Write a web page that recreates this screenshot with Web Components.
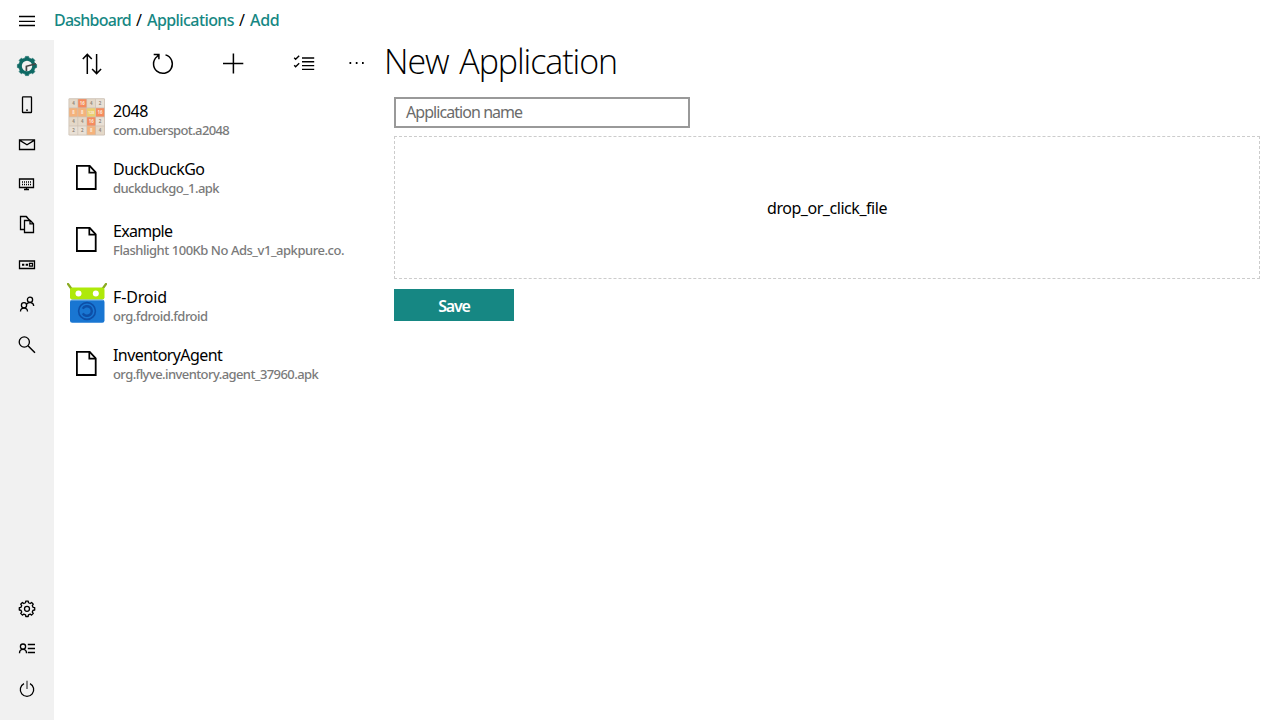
<!DOCTYPE html>
<html lang="en"><head><meta charset="utf-8"><title>New Application</title>
<style>html,body{margin:0;height:100%;overflow:hidden;background:#fff;color:#000;font:16px/20px "Noto Sans","Open Sans",sans-serif}</style></head>
<body><app-shell></app-shell>
<script>
const gear=(cx,cy,n,R,r)=>{let p=[];for(let i=0;i<n;i++){[[-.3,r],[-.2,R],[.2,R],[.3,r]].forEach(([o,d])=>{const a=(i+o)*2*Math.PI/n;p.push((cx+d*Math.sin(a)).toFixed(2)+' '+(cy-d*Math.cos(a)).toFixed(2))})}return 'M'+p.join('L')+'Z'};
const tiles=['#e4d8c8 4','#f58b5e 16','#e4d8c8 4','#e9e0d5 2','#f4b27c 8','#f4b27c 8','#ebd070 128','#f58b5e 16','#e4d8c8 4','#e4d8c8 4','#f58b5e 16','#e9e0d5 2','#e9e0d5 2','#e9e0d5 2','#f4b27c 8','#e4d8c8 4'];
const icons={
menu:'<path d="M4 8.5h16M4 13.3h16M4 17.5h16" stroke-width="1.3"/>',
logo:`<path d="${gear(12,13,8,9.7,8.3)}" fill="#0e6964" stroke="#0e6964" stroke-width=".6" stroke-linejoin="round"/><circle cx="12" cy="13" r="5.2" fill="#f1f1f1" stroke="none"/><path d="M11.4 18v-4.7L21 10.8" stroke="#444" stroke-width="1.7"/>`,
phone:'<rect x="7.5" y="3.8" width="9" height="15.7" rx=".6"/><path d="M11 17.2h2"/>',
mail:'<path d="M4.5 6.8h15v9.7h-15zM4.8 7.4 12 11.8l7.2-4.4"/>',
screen:'<path d="M4.5 6h14v8.5h-14zM11.5 14.5v2M9 16.5h5"/><path d="M7 9h10M7 11.5h10" stroke-dasharray="1 1"/>',
copy:'<path d="M9.2 16.5H5.5v-13h5.8l1.5 1.5M9.5 7.5h5.8l3.2 3.3v8.7h-9zM15 7.5v3.4h3.5M11 3.5l4 4"/>',
box:'<path d="M4.5 8h15v7.5h-15z"/><path d="M7 11.8h2.3M10.7 11.8h2.3" stroke-width="2"/><path d="M14.5 10.4h3v2.8h-3z"/>',
people:'<circle cx="15" cy="6.7" r="2.6"/><circle cx="9" cy="12.3" r="2.6"/><path d="M5.5 18.5c0-4.6 7-4.6 7 0M11.6 11.2c2-2.6 7-2.4 7.1 1.8"/>',
search:'<circle cx="9.3" cy="9" r="5.1"/><path d="m13 12.7 7 7" stroke-width="1.5"/>',
gear:`<path d="${gear(12,11.8,8,7.8,6.2)}" stroke-linejoin="round"/><circle cx="12" cy="11.8" r="2.5"/>`,
contact:'<circle cx="8" cy="9.6" r="2.6"/><path d="M4.5 16.2c0-5.2 7-5.2 7 0M12.8 7.5H20M12.8 11.5H20M12.8 15.5H20" stroke-width="1.35"/>',
power:'<path d="M9 6.6a6.7 6.7 0 1 0 6 0"/><path d="M12 3.8V12" stroke="#777" stroke-width="1.8"/>',
sort:'<path d="M7.3 22V2.5M2.8 7l4.5-4.6L11.8 7M16.6 2v19.5M12.1 17l4.5 4.6 4.5-4.6" stroke-width="1.5"/>',
refresh:'<path d="M6.2 4.5A9.4 9.4 0 1 0 14.5 2.9M2.7 2.5h5.2v4.8M7.5 3 5.7 5" stroke-width="1.5"/>',
plus:'<path d="M1 11.6h20.3M11.4 1.5v20" stroke-width="1.5"/>',
list:'<path d="M9 6h12.2M9 9.8h12.2M9 13.6h12.2M9 17.4h12.2M1.2 5.8l1.4 1.4 3.6-3.4M1.2 13.3l1.4 1.4 3.6-3.4" stroke-width="1.4"/>',
dots:'<path d="M4.5 11h1.7M10.8 11h1.7M17 11h1.7" stroke-width="1.8"/>'};
const art={
file:'<path d="M9.9 8.9h12.8l6 6.5V32H9.9z" fill="none" stroke="#000" stroke-width="1.8"/><path d="M22.3 9v6.6H29" fill="none" stroke="#000" stroke-width="1.7"/>',
game:'<rect x="1.5" y="1.3" width="36.5" height="37.2" rx="1.2" fill="#cdc1b4"/>'+tiles.map((t,i)=>{const [c,n]=t.split(' '),x=2.3+i%4*8.9,y=2.2+(i>>2)*9.05;return `<rect x="${x}" y="${y}" width="8.2" height="8.3" fill="${c}"/><text x="${x+4.1}" y="${y+5.7}" text-anchor="middle" font-size="${n.length>2?3.5:4.4}" font-weight="700" fill="${+n>4?'#fbe9d9':'#94887b'}">${n}</text>`}).join(''),
droid:'<path d="m1 1 3.6 5M39 1l-3.6 5" stroke="#8aab22" stroke-width="2.2" stroke-linecap="round"/><rect x="3" y="4.5" width="34.5" height="12" rx="2.2" fill="#aee90a"/><circle cx="11.5" cy="10.6" r="3" fill="#fff"/><circle cx="28.8" cy="10.6" r="3" fill="#fff"/><rect x="3" y="16.7" width="34.5" height="23" rx="2.2" fill="#1976d2"/><path d="M4 17.3h32.5" stroke="#62a5e4"/><circle cx="20" cy="28" r="8.4" fill="none" stroke="#0d4fa8" stroke-width="1.6"/><path d="M15.8 25.7a4.8 4.8 0 1 1 0 4.6" fill="none" stroke="#0d4fa8" stroke-width="2.4"/>'};
const define=(name,render,after)=>customElements.define(name,class extends HTMLElement{connectedCallback(){if(!this.shadowRoot){this.attachShadow({mode:'open'}).innerHTML=render(this);after&&after(this)}}});
define('ui-icon',e=>`<style>:host{display:block;width:24px;height:24px;flex:none}svg{display:block;fill:none;stroke:#000;stroke-width:1.3}</style><svg width="24" height="24" viewBox="0 0 24 24">${icons[e.getAttribute('name')]}</svg>`);
define('app-art',e=>`<style>:host{display:block;width:40px;height:40px;flex:none}svg{display:block;font-family:"Noto Sans",sans-serif}</style><svg width="40" height="40" viewBox="0 0 40 40">${art[e.getAttribute('name')]}</svg>`);
/* Tracks its text so that the line takes the requested width. */
define('fit-text',()=>'<style>:host{display:inline-block;white-space:pre}</style><span><slot></slot></span>',e=>{const w=+e.getAttribute('w'),s=e.shadowRoot.querySelector('span');s.style.letterSpacing=(w-s.getBoundingClientRect().width)/e.textContent.length+'px'});
define('top-bar',()=>`<style>:host{display:flex;height:40px;align-items:center;padding-left:15px;box-sizing:border-box}nav{display:flex;margin-left:15px;height:20px}a{color:#168783;font-weight:500}i{font-style:normal;width:16px;text-align:center}</style><ui-icon name="menu"></ui-icon><nav><a><fit-text w="77">Dashboard</fit-text></a><i>/</i><a><fit-text w="87">Applications</fit-text></a><i>/</i><a><fit-text w="29.5">Add</fit-text></a></nav>`);
define('side-rail',()=>`<style>:host{display:flex;flex-direction:column;width:54px;box-sizing:border-box;background:#f1f1f1;padding:13px 15px 19px;gap:16px}.space{flex:1}</style>${['logo','phone','mail','screen','copy','box','people','search'].map(n=>`<ui-icon name="${n}"></ui-icon>`).join('')}<div class="space"></div>${['gear','contact','power'].map(n=>`<ui-icon name="${n}"></ui-icon>`).join('')}`);
define('tool-bar',()=>`<style>:host{display:flex;gap:47px;padding:12px 0 0 26px;height:40px}ui-icon:last-child{margin-left:-19px}</style>${['sort','refresh','plus','list','dots'].map(n=>`<ui-icon name="${n}"></ui-icon>`).join('')}`);
define('app-row',e=>{const g=n=>e.getAttribute(n);return `<style>:host{display:flex;height:${g('height')}px;padding-left:13px;box-sizing:border-box}app-art{margin-top:${g('icon')==='file'?7:5}px}div{margin:9px 0 0 6px}fit-text{display:block}.sub{color:#7a7a7a;font-size:13px;line-height:18px;font-weight:500}</style><app-art name="${g('icon')}"></app-art><div><fit-text w="${g('tw')}">${g('name')}</fit-text><fit-text class="sub" w="${g('sw')}">${g('file')}</fit-text></div>`});
define('app-list',()=>`<style>:host{display:block;width:330px}</style><tool-bar></tool-bar>
<app-row icon="game" height="58" name="2048" tw="35" file="com.uberspot.a2048" sw="116.2"></app-row>
<app-row icon="file" height="62" name="DuckDuckGo" tw="91.5" file="duckduckgo_1.apk" sw="106"></app-row>
<app-row icon="file" height="66" name="Example" tw="59.2" file="Flashlight 100Kb No Ads_v1_apkpure.co." sw="231"></app-row>
<app-row icon="droid" height="58" name="F-Droid" tw="54" file="org.fdroid.fdroid" sw="94.6"></app-row>
<app-row icon="file" height="58" name="InventoryAgent" tw="109.2" file="org.flyve.inventory.agent_37960.apk" sw="205.2"></app-row>`);
define('app-form',()=>`<style>:host{display:block;flex:1;padding:0 20px 0 10px}h1{margin:0 0 0 -10px;height:57px;font:300 34px/43px "Open Sans","Noto Sans",sans-serif;word-spacing:3px}.field{width:296px;height:31px;box-sizing:border-box;border:2px solid #999;padding:3px 10px;line-height:20px;color:#6b6b6b}.drop{height:143px;box-sizing:border-box;border:1px dashed #ccc;margin:8px 0 10px;display:grid;place-items:center}.save{width:120px;height:32px;background:#168783;color:#fff;font-weight:600;display:grid;place-items:center}.save fit-text{margin-top:2px}</style><h1><fit-text w="233">New Application</fit-text></h1><div class="field"><fit-text w="116.2">Application name</fit-text></div><div class="drop"><fit-text w="120">drop_or_click_file</fit-text></div><div class="save" role="button"><fit-text w="31.5">Save</fit-text></div>`);
define('app-shell',()=>`<style>:host{display:flex;flex-direction:column;height:100vh}main{flex:1;display:flex;min-height:0}</style><top-bar></top-bar><main><side-rail></side-rail><app-list></app-list><app-form></app-form></main>`);
</script></body></html>
